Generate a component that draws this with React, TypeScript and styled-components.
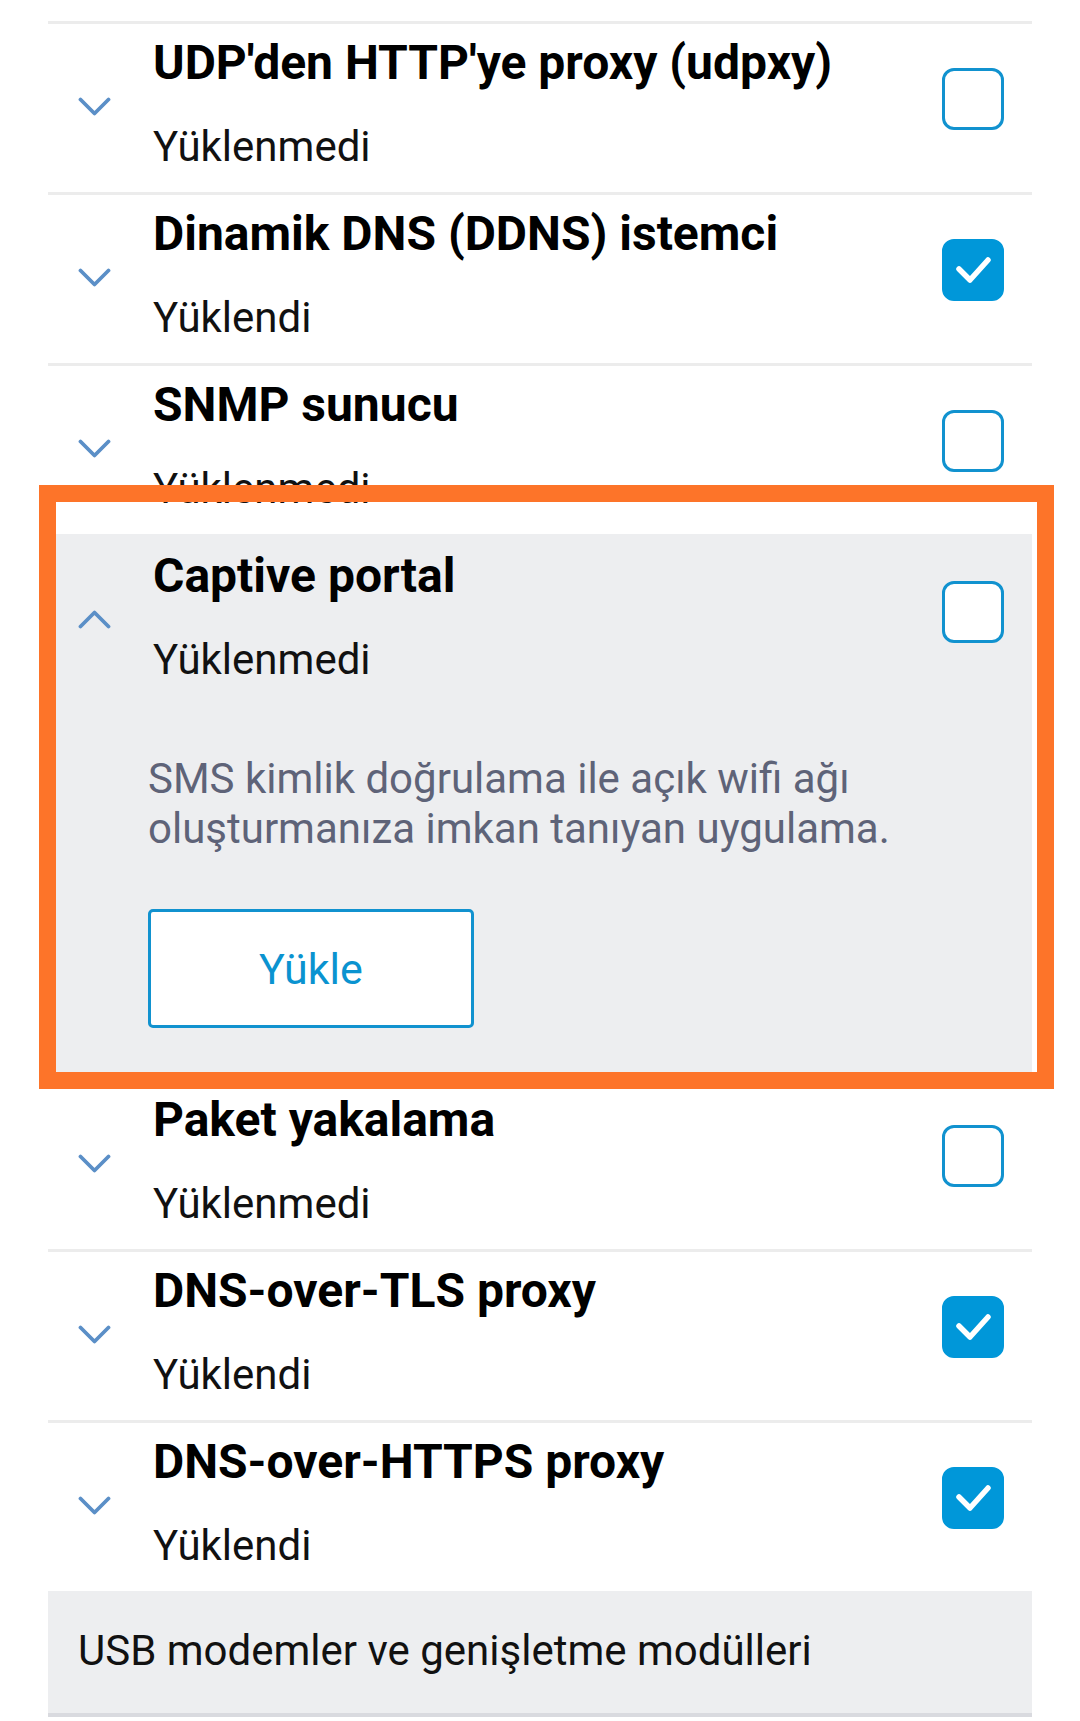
import React from "react";
import styled, { createGlobalStyle } from "styled-components";

const GlobalStyle = createGlobalStyle`
  html, body {
    margin: 0;
    padding: 0;
    background: #ffffff;
  }
  body {
    font-family: Roboto, "Noto Sans", "Liberation Sans", sans-serif;
    color: #111111;
  }
  * { box-sizing: border-box; }
`;

const Page = styled.div`
  position: relative;
  width: 1080px;
  min-height: 1721px;
  padding: 21px 48px 0 48px;
  overflow: hidden;
`;

const List = styled.div`
  display: flex;
  flex-direction: column;
`;

const Row = styled.div<{ $expanded?: boolean }>`
  border-top: 3px solid ${(p) => (p.$expanded ? "#edeef0" : "#ececec")};
  background: ${(p) => (p.$expanded ? "#edeef0" : "#ffffff")};
`;

const Header = styled.div`
  display: grid;
  grid-template-columns: 105px 1fr 62px;
  padding: 11px 28px 21px 0;
`;

const ChevronCell = styled.div`
  align-self: start;
  margin-top: 62px;
  margin-left: 30px;
  width: 33px;
  height: 19px;
  display: flex;
`;

const TextCol = styled.div`
  display: flex;
  flex-direction: column;
`;

const Title = styled.div`
  font-size: 48px;
  line-height: 56px;
  font-weight: 700;
  color: #000000;
  white-space: nowrap;
`;

const Status = styled.div`
  margin-top: 31px;
  font-size: 42px;
  line-height: 49px;
  font-weight: 400;
  color: #111111;
`;

const Box = styled.div<{ $checked?: boolean }>`
  align-self: start;
  margin-top: 33px;
  width: 62px;
  height: 62px;
  border-radius: 12px;
  border: 3px solid ${(p) => (p.$checked ? "#0097d9" : "#1192cf")};
  background: ${(p) => (p.$checked ? "#0097d9" : "#ffffff")};
  display: flex;
  align-items: center;
  justify-content: center;
`;

const Body = styled.div`
  padding: 49px 28px 50px 100px;
`;

const Description = styled.p`
  margin: 0;
  font-size: 42px;
  line-height: 50px;
  color: #5e6378;
`;

const InstallButton = styled.button`
  margin-top: 55px;
  width: 326px;
  height: 119px;
  border: 3px solid #1192cf;
  border-radius: 5px;
  background: #ffffff;
  color: #0a93d0;
  font-family: Roboto, "Noto Sans", sans-serif;
  font-size: 43px;
  padding: 0;
  display: flex;
  align-items: center;
  justify-content: center;
`;

const SectionHeader = styled.div`
  background: #edeef0;
  border-bottom: 4px solid #d9dadf;
  padding: 35px 28px 38px 30px;
  font-size: 42px;
  line-height: 49px;
  color: #111111;
`;

const Highlight = styled.div`
  position: absolute;
  left: 39px;
  top: 485px;
  width: 1015px;
  height: 604px;
  border: 17px solid #fd7429;
  pointer-events: none;
`;

const Chevron = ({ up }: { up?: boolean }) => (
  <svg width="33" height="19" viewBox="0 0 33 19">
    <polyline
      points={up ? "2.5,16.5 16.5,2.5 30.5,16.5" : "2.5,2.5 16.5,16.5 30.5,2.5"}
      fill="none"
      stroke="#5b8fc7"
      strokeWidth="3.8"
      strokeLinecap="round"
      strokeLinejoin="round"
    />
  </svg>
);

const Check = () => (
  <svg width="62" height="62" viewBox="0 0 62 62" style={{ margin: -3 }}>
    <polyline
      points="17,30 28,41 46,21"
      fill="none"
      stroke="#ffffff"
      strokeWidth="5.5"
      strokeLinecap="round"
      strokeLinejoin="round"
    />
  </svg>
);

type Item = {
  title: string;
  installed: boolean;
  expanded?: boolean;
  description?: string;
};

const items: Item[] = [
  { title: "UDP'den HTTP'ye proxy (udpxy)", installed: false },
  { title: "Dinamik DNS (DDNS) istemci", installed: true },
  { title: "SNMP sunucu", installed: false },
  {
    title: "Captive portal",
    installed: false,
    expanded: true,
    description:
      "SMS kimlik doğrulama ile açık wifi ağı oluşturmanıza imkan tanıyan uygulama.",
  },
  { title: "Paket yakalama", installed: false },
  { title: "DNS-over-TLS proxy", installed: true },
  { title: "DNS-over-HTTPS proxy", installed: true },
];

const ComponentRow = ({ item }: { item: Item }) => (
  <Row $expanded={item.expanded}>
    <Header>
      <ChevronCell>
        <Chevron up={item.expanded} />
      </ChevronCell>
      <TextCol>
        <Title>{item.title}</Title>
        <Status>{item.installed ? "Yüklendi" : "Yüklenmedi"}</Status>
      </TextCol>
      <Box $checked={item.installed}>{item.installed && <Check />}</Box>
    </Header>
    {item.expanded && (
      <Body>
        <Description>{item.description}</Description>
        <InstallButton>Yükle</InstallButton>
      </Body>
    )}
  </Row>
);

export default function App() {
  return (
    <>
      <GlobalStyle />
      <Page>
        <List>
          {items.map((item) => (
            <ComponentRow key={item.title} item={item} />
          ))}
          <SectionHeader>USB modemler ve genişletme modülleri</SectionHeader>
        </List>
        <Highlight />
      </Page>
    </>
  );
}
